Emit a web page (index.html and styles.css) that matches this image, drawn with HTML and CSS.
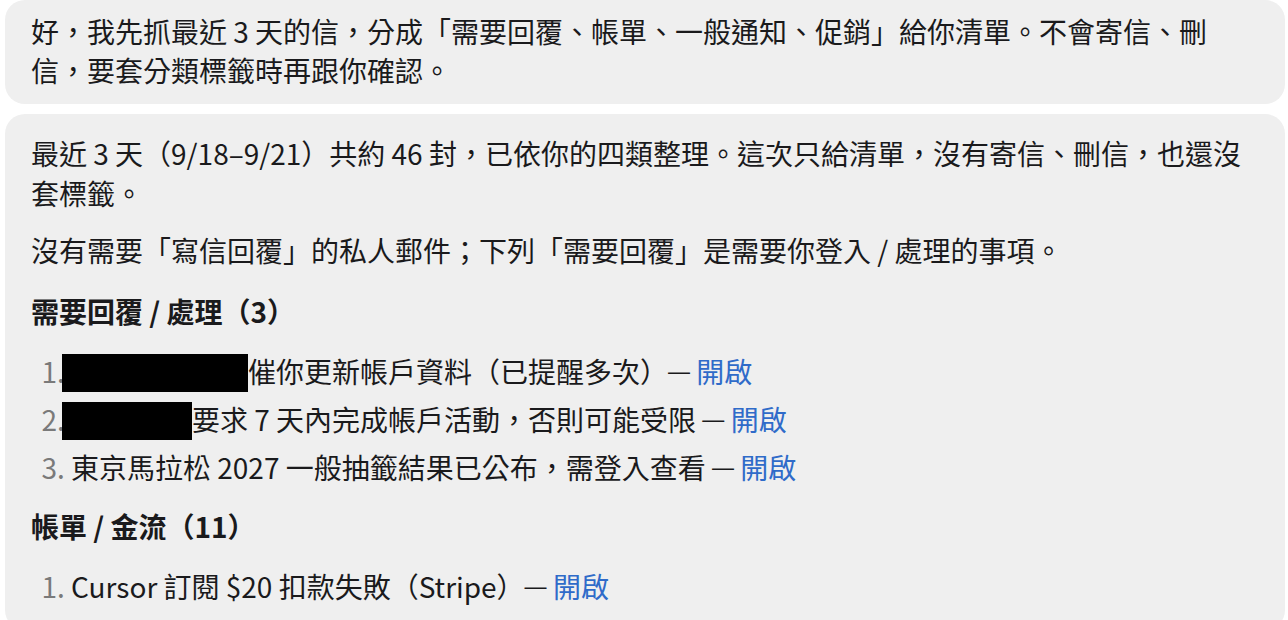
FILE: index.html
```html
<!doctype html>
<html lang="zh-Hant">

<head>
  <meta charset="UTF-8">
  <meta name="viewport" content="width=device-width, initial-scale=1.0">
  <title>郵件整理</title>
  <link rel="stylesheet" href="styles.css">
</head>

<body>
  <div class="chat">
    <div class="msg msg-top">
      <p>好，我先抓最近 3 天的信，分成「需要回覆、帳單、一般通知、促銷」給你清單。不會寄信、刪信，要套分類標籤時再跟你確認。</p>
    </div>

    <div class="msg">
      <p>最近 3 天（9/18–9/21）共約 46 封，已依你的四類整理。這次只給清單，沒有寄信、刪信，也還沒套標籤。</p>
      <p>沒有需要「寫信回覆」的私人郵件；下列「需要回覆」是需要你登入 / 處理的事項。</p>

      <h3>需要回覆 / 處理（3）</h3>
      <ol>
        <li><span class="redact redact-lg"></span>催你更新帳戶資料（已提醒多次）<span class="dash">—</span> <a href="#">開啟</a></li>
        <li><span class="redact redact-sm"></span>要求 7 天內完成帳戶活動，否則可能受限 <span class="dash">—</span> <a href="#">開啟</a></li>
        <li>東京馬拉松 2027 一般抽籤結果已公布，需登入查看 <span class="dash">—</span> <a href="#">開啟</a></li>
      </ol>

      <h3>帳單 / 金流（11）</h3>
      <ol>
        <li>Cursor 訂閱 $20 扣款失敗（Stripe）<span class="dash">—</span> <a href="#">開啟</a></li>
      </ol>
    </div>
  </div>
</body>

</html>
```

FILE: styles.css
```css
* {
  margin: 0;
  padding: 0;
  box-sizing: border-box;
}

body {
  background-color: #fff;
  color: #1a1a1c;
  font-family: "Noto Sans CJK TC", "Noto Sans", sans-serif;
  font-size: 28px;
  line-height: 1.4;
  overflow: hidden;
}

.chat {
  display: flex;
  flex-direction: column;
  gap: 10px;
  padding: 0 3px 0 5px;
}

/* 訊息泡泡 */
.msg {
  background-color: #efefef;
  border-radius: 20px;
  padding: 20px 26px;
}

/* 截圖頂端被裁掉一點 */
.msg-top {
  padding-top: 12px;
  padding-bottom: 14px;
}

.msg p + p {
  margin-top: 18px;
}

.msg h3 {
  font-size: 28px;
  font-weight: 700;
  margin: 22px 0 16px;
}

.msg ol + h3 {
  margin-top: 16px;
}

.msg ol {
  padding-left: 40px;
}

.msg li {
  line-height: 48px;
}

.msg li::marker {
  color: #7a7a7a;
}

.msg a {
  color: #2f6bc9;
  text-decoration: none;
}

/* 破折號用拉丁字型，比較粗短 */
.dash {
  font-family: "Liberation Sans", sans-serif;
  font-size: 22px;
  line-height: 1;
  vertical-align: 4px;
}

/* 遮住的寄件者 */
.redact {
  display: inline-block;
  height: 38px;
  background-color: #000;
  margin-left: -9px;
  vertical-align: -9px;
}

.redact-lg {
  width: 186px;
}

.redact-sm {
  width: 130px;
}
```
